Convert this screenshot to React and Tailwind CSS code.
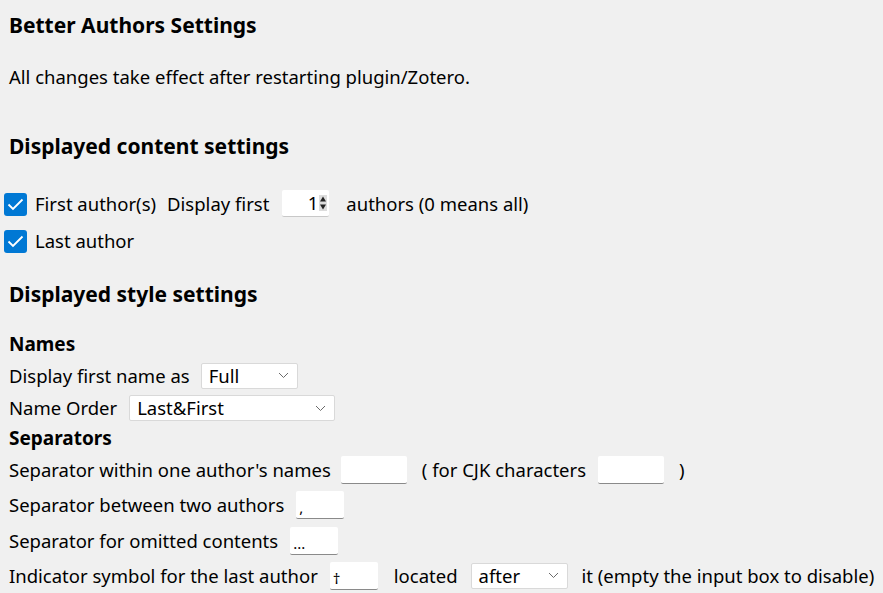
import React from "react";

const font = { fontFamily: '"Noto Sans", "Open Sans", sans-serif' };

function Check() {
  return (
    <span className="inline-flex h-[23px] w-[23px] shrink-0 items-center justify-center rounded-[3px] bg-[#0078d4]">
      <svg width="17" height="13" viewBox="0 0 17 13" fill="none">
        <path d="M1.5 6.5 L6 11 L15.5 1.5" stroke="white" strokeWidth="1.8" />
      </svg>
    </span>
  );
}

function TextBox({ w, value = "", className = "" }) {
  return (
    <span
      className={`inline-flex h-[28px] shrink-0 items-end rounded-[2px] border-b border-b-[#8a8a8a] bg-white px-[3px] pb-[3px] text-[15px] leading-none text-black ${className}`}
      style={{ width: w }}
    >
      {value}
    </span>
  );
}

function Select({ w, value }) {
  return (
    <span
      className="inline-flex h-[26px] shrink-0 items-center justify-between rounded-[2px] border border-[#d9d9d9] bg-white pl-[7px] pr-[8px] text-[18.5px] text-black"
      style={{ width: w }}
    >
      <span>{value}</span>
      <svg width="11" height="7" viewBox="0 0 11 7" fill="none">
        <path d="M1 1 L5.5 5.5 L10 1" stroke="#6b6b6b" strokeWidth="1" />
      </svg>
    </span>
  );
}

export default function App() {
  return (
    <div
      className="h-[593px] w-[883px] overflow-hidden whitespace-nowrap bg-[#f0f0f0] px-[9px] text-[18.5px] text-black [&_span]:shrink-0"
      style={font}
    >
      <div className="flex h-[52px] items-center text-[21px] font-bold">Better Authors Settings</div>
      <div className="flex h-[50px] items-center">All changes take effect after restarting plugin/Zotero.</div>
      <div className="mt-[25px] flex h-[40px] items-center text-[21px] font-bold">Displayed content settings</div>

      <div className="mt-[18px] flex h-[37px] items-center">
        <span className="-ml-[5px] mr-[8px]"><Check /></span>
        <span>First author(s)</span>
        <span className="ml-[11px]">Display first</span>
        <span className="relative ml-[13px] inline-flex h-[27px] w-[47px] items-center justify-end rounded-[2px] border-b border-b-[#c8c8c8] bg-white pr-[2px]">
          <span className="leading-none">1</span>
          <svg width="8" height="16" viewBox="0 0 8 16" className="ml-[1px]">
            <rect x="0" y="0" width="8" height="16" fill="#dcdcdc" />
            <path d="M4 1.5 L7 6.5 L1 6.5 Z" fill="#222" />
            <path d="M4 14.5 L7 9.5 L1 9.5 Z" fill="#222" />
          </svg>
        </span>
        <span className="ml-[17px]">authors (0 means all)</span>
      </div>
      <div className="flex h-[37px] items-center">
        <span className="-ml-[5px] mr-[8px]"><Check /></span>
        <span>Last author</span>
      </div>

      <div className="mt-[16px] flex h-[40px] items-center text-[21px] font-bold">Displayed style settings</div>

      <div className="mt-[14px] flex h-[30px] items-center text-[19px] font-bold">Names</div>
      <div className="flex h-[33px] items-center">
        <span>Display first name as</span>
        <span className="ml-[11px]"><Select w={97} value="Full" /></span>
      </div>
      <div className="flex h-[32px] items-center">
        <span>Name Order</span>
        <span className="ml-[12px]"><Select w={206} value="Last&First" /></span>
      </div>
      <div className="flex h-[28px] items-center text-[19px] font-bold">Separators</div>
      <div className="flex h-[35px] items-center">
        <span>Separator within one author's names</span>
        <span className="ml-[10px] flex"><TextBox w={66} /></span>
        <span className="ml-[15px]">( for CJK characters</span>
        <span className="ml-[12px] flex"><TextBox w={66} /></span>
        <span className="ml-[15px]">)</span>
      </div>
      <div className="flex h-[36px] items-center">
        <span>Separator between two authors</span>
        <span className="ml-[12px] flex"><TextBox w={48} value="," /></span>
      </div>
      <div className="flex h-[35px] items-center">
        <span>Separator for omitted contents</span>
        <span className="ml-[12px] flex"><TextBox w={48} value="..." /></span>
      </div>
      <div className="flex h-[35px] items-center">
        <span>Indicator symbol for the last author</span>
        <span className="ml-[12px] flex"><TextBox w={48} value="†" /></span>
        <span className="ml-[16px]">located</span>
        <span className="ml-[13px]"><Select w={97} value="after" /></span>
        <span className="ml-[14px]">it (empty the input box to disable)</span>
      </div>
    </div>
  );
}
